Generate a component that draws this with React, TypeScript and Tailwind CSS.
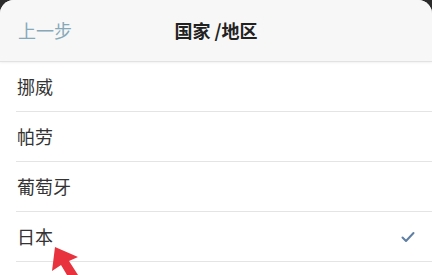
import React from 'react';

const countries = [
  { name: '挪威', selected: false },
  { name: '帕劳', selected: false },
  { name: '葡萄牙', selected: false },
  { name: '日本', selected: true },
  { name: '', selected: false },
];

export default function App() {
  return (
    <div
      className="relative w-[432px] h-[275px] overflow-hidden bg-[#2b2b2b]"
      style={{ fontFamily: '"Noto Sans CJK SC", "Noto Sans", sans-serif' }}
    >
      <div className="h-full rounded-t-[14px] overflow-hidden bg-white">
        <div className="grid grid-cols-[1fr_auto_1fr] items-center h-[62px] bg-[#f7f7f7] border-b border-[#e2e2e2] shadow-[0_1px_2px_rgba(0,0,0,0.06)]">
          <span className="pl-[18px] text-[18px] text-[#86a9ba]">上一步</span>
          <span className="text-[18px] font-bold text-[#222]">国家 /地区</span>
          <span />
        </div>
        {countries.map((c, i) => (
          <div key={i} className="ml-4 pr-4 h-[50px] flex items-center justify-between border-b border-[#e4e4e4]">
            <span className="pl-px text-[18px] text-[#333]">{c.name}</span>
            {c.selected && (
              <svg width="14" height="12" viewBox="0 0 14 12" className="mr-[1px]">
                <polyline points="1.5,6.5 5,10 12.5,2" fill="none" stroke="#5f7fa3" strokeWidth="2" strokeLinecap="round" strokeLinejoin="round" />
              </svg>
            )}
          </div>
        ))}
      </div>
      {/* red pointer arrow drawn over the list */}
      <svg className="absolute left-0 top-0" width="432" height="275" viewBox="0 0 432 275">
        <polygon
          points="55,247 78,257 69,261 78,275 67,275 61,265 52,271"
          fill="#e8323d"
        />
      </svg>
    </div>
  );
}
